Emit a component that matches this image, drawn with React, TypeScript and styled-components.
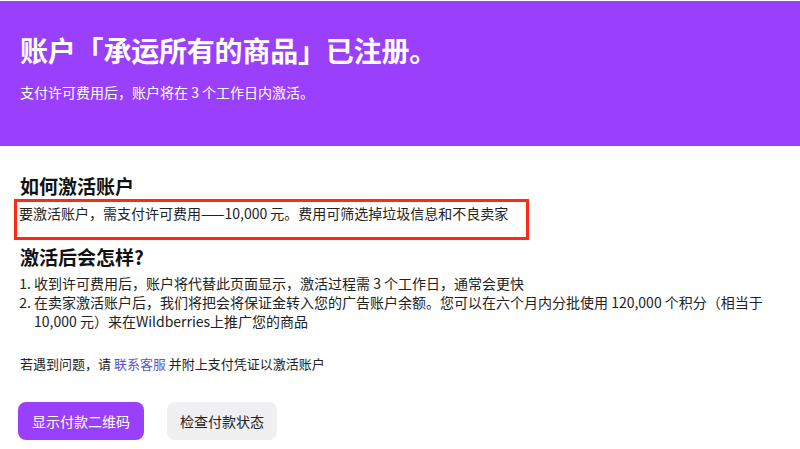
import styled, { createGlobalStyle } from "styled-components";

const GlobalStyle = createGlobalStyle`
  html, body {
    margin: 0;
    padding: 0;
    background: #ffffff;
  }
  body {
    font-family: "Noto Sans CJK SC", "Noto Sans", sans-serif;
    color: #222222;
  }
`;

const Page = styled.div`
  width: 800px;
  height: 449px;
  overflow: hidden;
  padding-top: 1px;
  box-sizing: border-box;
`;

const Banner = styled.header`
  height: 145px;
  background: #9a3ffb;
  color: #ffffff;
  padding: 29px 20px 0;
  box-sizing: border-box;
`;

const Title = styled.h1`
  margin: 0;
  font-size: 28px;
  line-height: 40px;
  font-weight: 700;
  letter-spacing: -0.2px;
`;

const Subtitle = styled.p`
  margin: 13px 0 0;
  font-size: 14px;
  line-height: 18px;
`;

const Body = styled.main`
  padding: 28px 20px 0;
`;

const Heading = styled.h2`
  margin: 0;
  font-size: 19px;
  line-height: 24px;
  font-weight: 700;
  color: #111111;
`;

const Highlight = styled.div`
  margin: 1px 0 0 -6px;
  width: 515px;
  height: 41px;
  box-sizing: border-box;
  border: 3px solid #ff2a12;
  padding: 1px 0 0 2px;
  font-size: 14px;
  line-height: 20px;
  white-space: nowrap;
`;

const SecondHeading = styled(Heading)`
  margin-top: 5px;
`;

const Steps = styled.ol`
  margin: 5px 0 0;
  padding: 0 0 0 14px;
  font-size: 14px;
  line-height: 19px;
`;

const Help = styled.p`
  margin: 24px 0 0;
  font-size: 13px;
  line-height: 18px;
`;

const Link = styled.a`
  color: #5a55d8;
  text-decoration: none;
`;

const Actions = styled.div`
  display: flex;
  gap: 23px;
  margin-top: 29px;
  margin-left: -2px;
`;

const Button = styled.button<{ $primary?: boolean }>`
  height: 38px;
  padding: 0 ${(p) => (p.$primary ? "14px" : "13px")};
  border: none;
  border-radius: 8px;
  font-family: inherit;
  font-size: 14px;
  background: ${(p) => (p.$primary ? "#9a3ffb" : "#f0f0f2")};
  color: ${(p) => (p.$primary ? "#ffffff" : "#222222")};
  cursor: pointer;
`;

export default function App() {
  return (
    <>
      <GlobalStyle />
      <Page>
        <Banner>
          <Title>账户「承运所有的商品」已注册。</Title>
          <Subtitle>支付许可费用后，账户将在 3 个工作日内激活。</Subtitle>
        </Banner>
        <Body>
          <Heading>如何激活账户</Heading>
          <Highlight>
            要激活账户，需支付许可费用——10,000 元。费用可筛选掉垃圾信息和不良卖家
          </Highlight>
          <SecondHeading>激活后会怎样?</SecondHeading>
          <Steps>
            <li>收到许可费用后，账户将代替此页面显示，激活过程需 3 个工作日，通常会更快</li>
            <li>
              在卖家激活账户后，我们将把会将保证金转入您的广告账户余额。您可以在六个月内分批使用 120,000 个积分（相当于
              10,000 元）来在Wildberries上推广您的商品
            </li>
          </Steps>
          <Help>
            若遇到问题，请 <Link href="#">联系客服</Link> 并附上支付凭证以激活账户
          </Help>
          <Actions>
            <Button $primary>显示付款二维码</Button>
            <Button>检查付款状态</Button>
          </Actions>
        </Body>
      </Page>
    </>
  );
}
